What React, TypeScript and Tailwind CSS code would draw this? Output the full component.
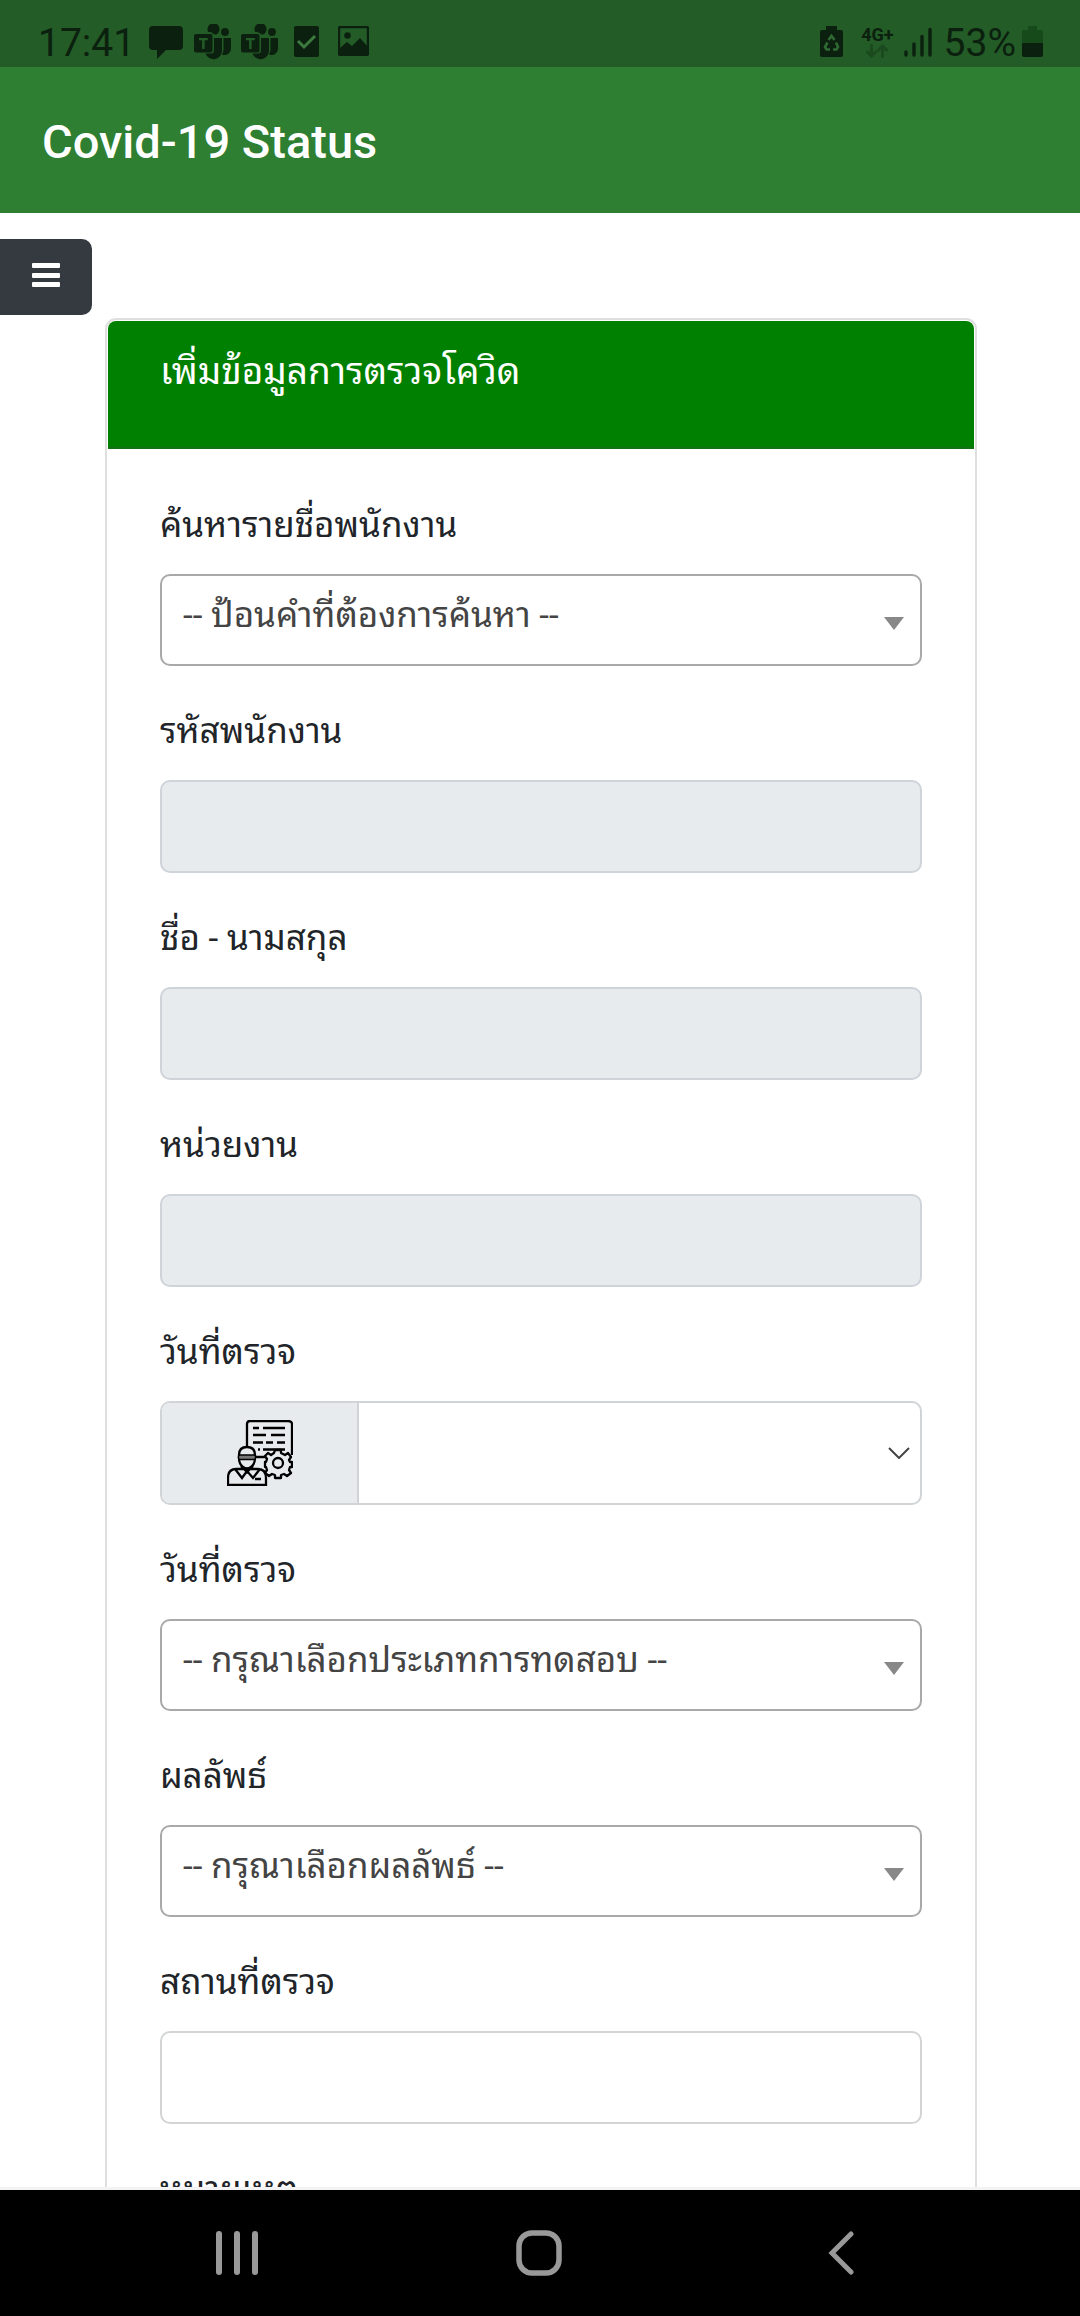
import type { ReactNode } from "react";

const THAI = "font-[Roboto,'Noto_Sans_Thai_Looped','Noto_Looped_Thai',Loma,Waree,'Noto_Sans_Thai','Noto_Sans',sans-serif]";

function MessageIcon() {
  return (
    <svg className="ml-[14px] mt-[26px] h-[34px] w-[34px] shrink-0" viewBox="0 0 34 34" fill="#0b200e" aria-hidden="true">
      <path d="M4 0h26a4 4 0 0 1 4 4v16a4 4 0 0 1-4 4H17L8 33V24H4a4 4 0 0 1-4-4V4a4 4 0 0 1 4-4Z" />
    </svg>
  );
}

function TeamsIcon() {
  return (
    <svg className="h-[36px] w-[38px] shrink-0" viewBox="0 0 38 36" fill="#0b200e" aria-hidden="true">
      <path d="M14.200 8a6 6 0 1 1 8.600 2.200Q20.500 11 19 9.500 18 8 16 8z" />
      <circle cx="31" cy="8" r="3.900" />
      <path d="M29.500 14H37v10.500a6.500 6.500 0 0 1-9 6q1.500-2.500 1.500-5.500z" />
      <path d="M20 14h8v12a8.500 8.500 0 0 1-16.500 3.500H17q3 0 3-3z" />
      <path
        fillRule="evenodd"
        d="M2 10h14.500q2 0 2 2v14.500q0 2-2 2H2q-2 0-2-2V12q0-2 2-2Zm3 4v2.300h3.100V25h2.500v-8.700h3.200V14Z"
      />
    </svg>
  );
}

function TaskIcon() {
  return (
    <svg className="h-[31px] w-[25px] shrink-0" viewBox="0 0 25 31" aria-hidden="true">
      <rect width="25" height="31" rx="2" fill="#0b200e" />
      <path d="m4 15 6 6 11-11" fill="none" stroke="#3c7a40" strokeWidth="3" />
    </svg>
  );
}

function PictureIcon() {
  return (
    <svg className="h-[30px] w-[31px] shrink-0" viewBox="0 0 31 30" aria-hidden="true">
      <rect x="1" y="1" width="29" height="28" rx="1.500" fill="none" stroke="#0b200e" strokeWidth="2.400" />
      <circle cx="9.500" cy="9.500" r="3.300" fill="#0b200e" />
      <path d="m2 22 7-6 5 4 8-8 8 9v8H2z" fill="#0b200e" />
    </svg>
  );
}

function BatterySaverIcon() {
  return (
    <svg className="mt-[26px] h-[31px] w-[23px] shrink-0" viewBox="0 0 23 31" aria-hidden="true">
      <path d="M6 0h11v4h4q2 0 2 2v23q0 2-2 2H2q-2 0-2-2V6q0-2 2-2h4z" fill="#0b200e" />
      <g fill="none" stroke="#2f6a33" strokeWidth="2.600">
        <path d="M8.500 14 11.500 10l3 4" />
        <path d="M16 16.500 18 21l-1.500 2.500H13" />
        <path d="M10 23.500H6.500L5 21l2.500-4.500" />
      </g>
    </svg>
  );
}

function DataArrows() {
  return (
    <svg className="h-[14px] w-[22px]" viewBox="0 0 22 14" fill="none" stroke="#1a4a1e" strokeWidth="3" aria-hidden="true">
      <path d="M5.500 0v11M0.500 7l5 5 5-5" />
      <path d="M16.500 14V2M11.500 7l5-5 5 5" />
    </svg>
  );
}

function SignalIcon() {
  return (
    <svg className="ml-[10px] mt-[27px] h-[31px] w-[28px] shrink-0" viewBox="0 0 28 31" stroke="#0b200e" strokeWidth="3.400" strokeLinecap="round" aria-hidden="true">
      <path d="M2 25v3M10 17v11M18 9.500V28M26 2.500V28" />
    </svg>
  );
}

function BatteryIcon() {
  return (
    <svg className="ml-[6px] mt-[26px] h-[31px] w-[21px] shrink-0" viewBox="0 0 21 31" aria-hidden="true">
      <path d="M6 0h9v4h4q2 0 2 2v11H0V6q0-2 2-2h4z" fill="#174a1a" />
      <path d="M0 17h21v12q0 2-2 2H2q-2 0-2-2z" fill="#0b200e" />
    </svg>
  );
}

function StatusBar() {
  return (
    <div className="flex h-[67px] shrink-0 items-start justify-between bg-[#235c26] pl-[38px] pr-[37px] text-[#0b200e]">
      <div className="flex items-start">
        <span className="mt-[20px] text-[39px] leading-[46px]">17:41</span>
        <MessageIcon />
        <div className="ml-[11px] mt-[24px] flex gap-[9px]">
          <TeamsIcon />
          <TeamsIcon />
        </div>
        <div className="ml-[15px] mt-[26px] flex gap-[19px]">
          <TaskIcon />
          <PictureIcon />
        </div>
      </div>
      <div className="flex items-start">
        <BatterySaverIcon />
        <div className="ml-[18px] mt-[26px] flex flex-col items-center">
          <span className="text-[18px] leading-[18px] font-bold">4G+</span>
          <DataArrows />
        </div>
        <SignalIcon />
        <span className="ml-[12px] mt-[20px] text-[39px] leading-[46px]">53%</span>
        <BatteryIcon />
      </div>
    </div>
  );
}

function MenuIcon() {
  return (
    <svg className="h-[24px] w-[28px]" viewBox="0 0 28 24" fill="#fff" aria-hidden="true">
      <rect width="28" height="5" rx="1" />
      <rect y="10" width="28" height="5" rx="1" />
      <rect y="19" width="28" height="5" rx="1" />
    </svg>
  );
}

function InspectorIcon() {
  return (
    <svg className="h-[66px] w-[66px]" viewBox="0 0 66 66" fill="none" stroke="#000" strokeWidth="2.300" aria-hidden="true">
      <path d="M20 27V4q0-3 3-3h38q4 0 4 3v31M28 37h10" />
      <path d="M26 8h6M36 8h22M26 15h13M44 15h14M26 22.500h10M39 22.500h7M50 22.500h8M31 29.500h2M36 29.500h22" />
      <path d="M12 38v-3q0-8 8-8t8 8v3q0 6-4 9-4 3-8 0-4-3-4-9Z" />
      <rect x="11.500" y="35" width="17" height="4.500" rx="1.500" fill="#777" strokeWidth="1.500" />
      <path d="M1 65V58q0-9 8-9h22q8 0 8 9v7ZM8 49l7 9 5-7 6 7 7-9M14 46l6 6 6-6M28 59h6" />
      <path
        d="M48 30h6v3l4 2 3-2 3 4-2 3 1 2h2v5h-2l-1 3 2 3-4 3-3-2-3 1v3h-6v-3l-3-1-3 2-4-3 2-3-1-3h-1v-5h1l1-3-2-3 3-3 3 2 3-2z"
        fill="#e8ebee"
        strokeLinejoin="round"
      />
      <circle cx="51" cy="43" r="5" />
    </svg>
  );
}

function Triangle() {
  return (
    <svg className="pointer-events-none absolute right-[18px] top-[43px] h-[13px] w-[20px]" viewBox="0 0 20 13" fill="#888" aria-hidden="true">
      <path d="M0 0h20L10 13z" />
    </svg>
  );
}

function Field({ id, label, children }: { id: string; label: string; children?: ReactNode }) {
  return (
    <div className="flex flex-col gap-[18px]">
      <label htmlFor={id} className="text-[35px] leading-[60px] text-[#212529]">
        {label}
      </label>
      {children}
    </div>
  );
}

function SelectBox({ id, placeholder }: { id: string; placeholder: string }) {
  return (
    <div className="relative">
      <select
        id={id}
        className="block h-[92px] w-full appearance-none rounded-[10px] border-2 border-[#a9a9a9] bg-white pb-2 pl-[21px] pr-14 text-[35px] text-[#444]"
      >
        <option>{placeholder}</option>
      </select>
      <Triangle />
    </div>
  );
}

function TextBox({ id, disabled = false }: { id: string; disabled?: boolean }) {
  return (
    <input
      id={id}
      type="text"
      disabled={disabled}
      className="block h-[93px] w-full rounded-[10px] border-2 border-[#d2d4d6] bg-white px-[21px] text-[35px] text-[#444] disabled:border-[#ced4da] disabled:bg-[#e8ebee]"
    />
  );
}

function DateBox({ id }: { id: string }) {
  return (
    <div className="flex h-[104px] overflow-hidden rounded-[10px] border-2 border-[#d0d4d6] bg-white">
      <span className="flex w-[197px] shrink-0 items-center justify-center border-r-2 border-[#d0d4d6] bg-[#e8ebee]">
        <InspectorIcon />
      </span>
      <input id={id} type="text" className="min-w-0 flex-1 px-5 text-[35px]" />
      <button type="button" aria-label="เปิดปฏิทิน" className="flex w-[32px] shrink-0 items-center">
        <svg className="h-[12px] w-[22px]" viewBox="0 0 22 12" fill="none" stroke="#444" strokeWidth="2" aria-hidden="true">
          <path d="m1 1 10 10L21 1" />
        </svg>
      </button>
    </div>
  );
}

function NavBar() {
  return (
    <nav className="flex h-[126px] shrink-0 items-center justify-between bg-black pl-[202px] pr-[204px] text-[#999]">
      <button type="button" aria-label="Recent apps" className="w-[70px]">
        <svg className="mx-auto h-[44px] w-[42px]" viewBox="0 0 42 44" fill="currentColor" aria-hidden="true">
          <rect width="6" height="44" rx="3" />
          <rect x="18" width="6" height="44" rx="3" />
          <rect x="36" width="6" height="44" rx="3" />
        </svg>
      </button>
      <button type="button" aria-label="Home" className="w-[70px]">
        <svg className="mx-auto h-[46px] w-[46px]" viewBox="0 0 46 46" fill="none" stroke="currentColor" strokeWidth="5.500" aria-hidden="true">
          <rect x="3" y="3" width="40" height="40" rx="13" />
        </svg>
      </button>
      <button type="button" aria-label="Back" className="w-[70px]">
        <svg className="mx-auto h-[44px] w-[26px]" viewBox="0 0 26 44" fill="none" stroke="currentColor" strokeWidth="5" strokeLinecap="round" aria-hidden="true">
          <path d="M23 3 4 22l19 19" />
        </svg>
      </button>
    </nav>
  );
}

export default function App() {
  return (
    <div className="flex h-screen flex-col overflow-hidden bg-white font-[Roboto,sans-serif]">
      <StatusBar />
      <header className="flex h-[146px] shrink-0 items-center bg-[#2f7f33] px-[42px] pt-1">
        <h1 className="text-[47px] leading-[56px] font-medium text-white">Covid-19 Status</h1>
      </header>
      <main className={`min-h-0 flex-1 overflow-hidden border-b-[3px] border-[#f3f3f3] ${THAI}`}>
        <button
          type="button"
          aria-label="Menu"
          className="mt-[26px] flex h-[76px] w-[92px] items-center justify-center rounded-r-[10px] bg-[#343a40] pb-1"
        >
          <MenuIcon />
        </button>
        <section className="ml-[105px] mr-[103px] mt-[3px] rounded-[11px] border-2 border-[#dfdfdf]">
          <h2 className="mx-px mt-px h-[128px] rounded-t-[8px] border-b-2 border-[#157015] bg-[#008000] px-[52px] pt-[18px] text-[37px] leading-[66px] text-white">
            เพิ่มข้อมูลการตรวจโควิด
          </h2>
          <form className="flex flex-col gap-[36px] px-[53px] pb-14 pt-[47px]">
            <Field id="search" label="ค้นหารายชื่อพนักงาน">
              <SelectBox id="search" placeholder="-- ป้อนคำที่ต้องการค้นหา --" />
            </Field>
            <Field id="code" label="รหัสพนักงาน">
              <TextBox id="code" disabled />
            </Field>
            <Field id="name" label="ชื่อ - นามสกุล">
              <TextBox id="name" disabled />
            </Field>
            <Field id="unit" label="หน่วยงาน">
              <TextBox id="unit" disabled />
            </Field>
            <Field id="date" label="วันที่ตรวจ">
              <DateBox id="date" />
            </Field>
            <Field id="type" label="วันที่ตรวจ">
              <SelectBox id="type" placeholder="-- กรุณาเลือกประเภทการทดสอบ --" />
            </Field>
            <Field id="result" label="ผลลัพธ์">
              <SelectBox id="result" placeholder="-- กรุณาเลือกผลลัพธ์ --" />
            </Field>
            <Field id="place" label="สถานที่ตรวจ">
              <TextBox id="place" />
            </Field>
            <Field id="note" label="หมายเหตุ">
              <TextBox id="note" />
            </Field>
          </form>
        </section>
      </main>
      <NavBar />
    </div>
  );
}
